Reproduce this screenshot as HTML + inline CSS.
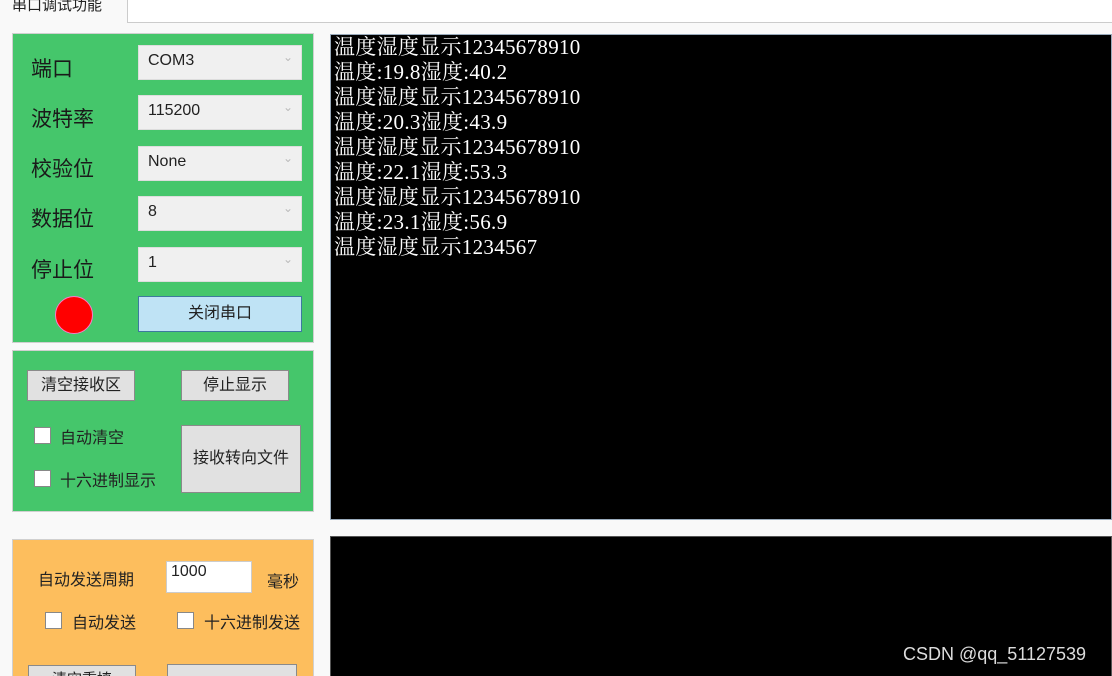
<!DOCTYPE html>
<html style="overflow:hidden;height:676px"><head><meta charset="utf-8"><style>
body{margin:0;width:1112px;height:676px;background:#f9f9f9;position:relative;overflow:hidden;font-family:"Liberation Sans","Noto Sans CJK SC",sans-serif;color:#222}
.a{position:absolute;box-sizing:border-box}
.tab{left:0;top:0;width:127px;height:22px;background:#f9f9f9;font-size:15px;padding-left:12px;line-height:12px;overflow:hidden}
.tabline{left:127px;top:0;width:985px;height:23px;border-left:1px solid #ccc;border-bottom:1px solid #ccc;background:#fff}
.g{background:#45c66b;border:1px solid #d0d0d0}
.o{background:#fdbe5d;border:1px solid #d0d0d0}
.lbl{font-size:21px;color:#1a1a1a}
.cb{background:#f0f0f0;border:1px solid #ddd;font-size:16px;padding-left:9px;line-height:30px;color:#222}
.cb:after{content:"⌄";position:absolute;right:8px;top:-4px;font-size:12px;color:#bbb}
.btn{background:#e1e1e1;border:1px solid #8a8a8a;font-size:15px;text-align:center;color:#222}
.chk{width:17px;height:17px;background:#fff;border:1px solid #888}
.t{font-size:16px;color:#222}
.term{background:#000;border:1px solid #9ab}
.out{color:#fff;font-family:"Liberation Serif","Noto Serif CJK SC",serif;font-size:21px;line-height:25px;left:334px;top:35px;white-space:pre;letter-spacing:0.3px}
</style></head><body>
<div class="a tab">串口调试功能</div>
<div class="a tabline"></div>
<div class="a g" style="left:12px;top:33px;width:302px;height:310px"></div>
<div class="a lbl" style="left:31px;top:53px">端口</div>
<div class="a lbl" style="left:31px;top:103px">波特率</div>
<div class="a lbl" style="left:31px;top:153px">校验位</div>
<div class="a lbl" style="left:31px;top:203px">数据位</div>
<div class="a lbl" style="left:31px;top:254px">停止位</div>
<div class="a cb" style="left:138px;top:45px;width:164px;height:35px">COM3</div>
<div class="a cb" style="left:138px;top:95px;width:164px;height:35px">115200</div>
<div class="a cb" style="left:138px;top:146px;width:164px;height:35px">None</div>
<div class="a cb" style="left:138px;top:196px;width:164px;height:35px">8</div>
<div class="a cb" style="left:138px;top:247px;width:164px;height:35px">1</div>
<div class="a" style="left:55px;top:296px;width:38px;height:38px;border-radius:50%;background:#f00;border:1px solid #f7c"></div>
<div class="a btn" style="left:138px;top:296px;width:164px;height:36px;background:#bfe3f5;border-color:#3d7a9e;line-height:34px;font-size:16px">关闭串口</div>

<div class="a g" style="left:12px;top:350px;width:302px;height:162px"></div>
<div class="a btn" style="left:27px;top:370px;width:108px;height:31px;line-height:29px;font-size:16px">清空接收区</div>
<div class="a btn" style="left:181px;top:370px;width:108px;height:31px;line-height:29px;font-size:16px">停止显示</div>
<div class="a chk" style="left:34px;top:427px"></div>
<div class="a t" style="left:60px;top:424px">自动清空</div>
<div class="a chk" style="left:34px;top:470px"></div>
<div class="a t" style="left:60px;top:467px">十六进制显示</div>
<div class="a btn" style="left:181px;top:425px;width:120px;height:68px;line-height:66px;font-size:16px">接收转向文件</div>

<div class="a o" style="left:12px;top:539px;width:302px;height:140px"></div>
<div class="a t" style="left:38px;top:566px">自动发送周期</div>
<div class="a" style="left:166px;top:561px;width:86px;height:32px;background:#fff;border:1px solid #ccc;font-size:16px;padding:1px 4px">1000</div>
<div class="a t" style="left:267px;top:568px">毫秒</div>
<div class="a chk" style="left:45px;top:612px"></div>
<div class="a t" style="left:72px;top:609px">自动发送</div>
<div class="a chk" style="left:177px;top:612px"></div>
<div class="a t" style="left:204px;top:609px">十六进制发送</div>
<div class="a btn" style="left:28px;top:665px;width:108px;height:30px;line-height:28px">清空重填</div>
<div class="a btn" style="left:167px;top:664px;width:130px;height:30px"></div>

<div class="a term" style="left:330px;top:34px;width:782px;height:486px"></div>
<div class="a term" style="left:330px;top:536px;width:782px;height:145px;border-color:#555"></div>
<div class="a out">温度湿度显示12345678910
温度:19.8湿度:40.2
温度湿度显示12345678910
温度:20.3湿度:43.9
温度湿度显示12345678910
温度:22.1湿度:53.3
温度湿度显示12345678910
温度:23.1湿度:56.9
温度湿度显示1234567</div>
<div class="a" style="left:903px;top:644px;color:#ddd;font-size:18px">CSDN @qq_51127539</div>
</body></html>
